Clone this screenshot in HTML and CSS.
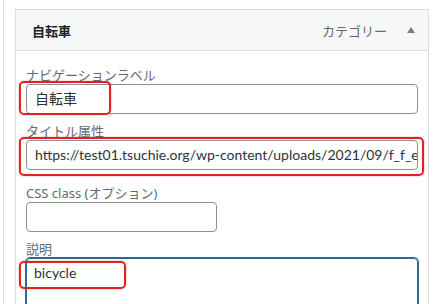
FILE: index.html
```html
<!DOCTYPE html>
<html lang="ja">
<head>
<meta charset="utf-8">
<link rel="stylesheet" href="styles.css">
</head>
<body>
<div class="page">
  <div class="panel">
    <div class="panel-head">
      <span class="item-title">自転車</span>
      <span class="item-controls">
        <span class="item-type">カテゴリー</span>
        <span class="arrow"></span>
      </span>
    </div>
    <div class="panel-body">
      <div class="field">
        <label class="field-label">ナビゲーションラベル</label>
        <div class="input">自転車</div>
      </div>
      <div class="field field-wide">
        <label class="field-label">タイトル属性</label>
        <div class="input">https://test01.tsuchie.org/wp-content/uploads/2021/09/f_f_e</div>
      </div>
      <div class="field">
        <label class="field-label">CSS class (オプション)</label>
        <div class="input half"></div>
      </div>
      <div class="field">
        <label class="field-label">説明</label>
        <div class="textarea">bicycle</div>
      </div>
    </div>
  </div>
  <div class="mark mark-1"></div>
  <div class="mark mark-2"></div>
  <div class="mark mark-3"></div>
</div>
</body>
</html>
```
FILE: styles.css
```css
html, body {
  margin: 0;
  padding: 0;
  background: #fff;
  height: 100%;
  overflow: hidden;
}
body {
  font-family: "Lato", "Noto Sans CJK JP", sans-serif;
  color: #1d2327;
}
.page {
  position: relative;
  margin-left: 3px;
  border-left: 1px solid #dcdcde;
  height: 100%;
  padding: 9px 0 0 11px;
  box-sizing: border-box;
}
.panel {
  width: 414px;
  border: 1px solid #dcdcde;
  border-bottom: none;
  box-sizing: border-box;
  height: 300px;
}
.panel-head {
  height: 40px;
  background: #f6f7f7;
  border-bottom: 1px solid #dcdcde;
  display: flex;
  align-items: center;
  justify-content: space-between;
  padding: 0 13px 0 16px;
}
.item-title {
  font-size: 13px;
  font-weight: 600;
  color: #1d2327;
  font-family: "Noto Sans CJK JP", sans-serif;
}
.item-controls {
  display: flex;
  align-items: center;
  gap: 20px;
}
.item-type {
  font-size: 13px;
  color: #646970;
  font-family: "Noto Sans CJK JP", sans-serif;
}
.arrow {
  width: 0;
  height: 0;
  border-left: 4px solid transparent;
  border-right: 4px solid transparent;
  border-bottom: 6px solid #787c82;
  margin-top: -1px;
}
.panel-body {
  padding: 15px 10px 0 10px;
  display: flex;
  flex-direction: column;
  gap: 8px;
}
.field {
  display: flex;
  flex-direction: column;
}
.field-wide {
  margin-bottom: 6px;
}
.field-label {
  font-size: 13px;
  line-height: 18px;
  color: #646970;
  font-family: "Noto Sans", "Noto Sans CJK JP", sans-serif;
}
.input {
  height: 30px;
  box-sizing: border-box;
  border: 1px solid #8c8f94;
  border-radius: 4px;
  padding: 0 8px;
  font-size: 14px;
  line-height: 28px;
  white-space: nowrap;
  overflow: hidden;
  color: #2c3338;
  font-family: "Lato", "Noto Sans CJK JP", sans-serif;
}
.input.half {
  width: 191px;
}
.textarea {
  height: 60px;
  box-sizing: border-box;
  border: 1px solid #2a6a9a;
  box-shadow: 0 0 0 1px #2a6a9a;
  border-radius: 4px;
  padding: 4px 7px;
  font-size: 14px;
  line-height: 20px;
  color: #2c3338;
}
.mark {
  position: absolute;
  border: 2px solid #e3211e;
  border-radius: 5px;
  box-shadow: 0 0 2px rgba(227, 33, 30, 0.5);
  box-sizing: border-box;
}
.mark-1 { left: 15px; top: 81px; width: 92px; height: 34px; }
.mark-2 { left: 15px; top: 137px; width: 405px; height: 39px; }
.mark-3 { left: 15px; top: 261px; width: 107px; height: 28px; }
```
